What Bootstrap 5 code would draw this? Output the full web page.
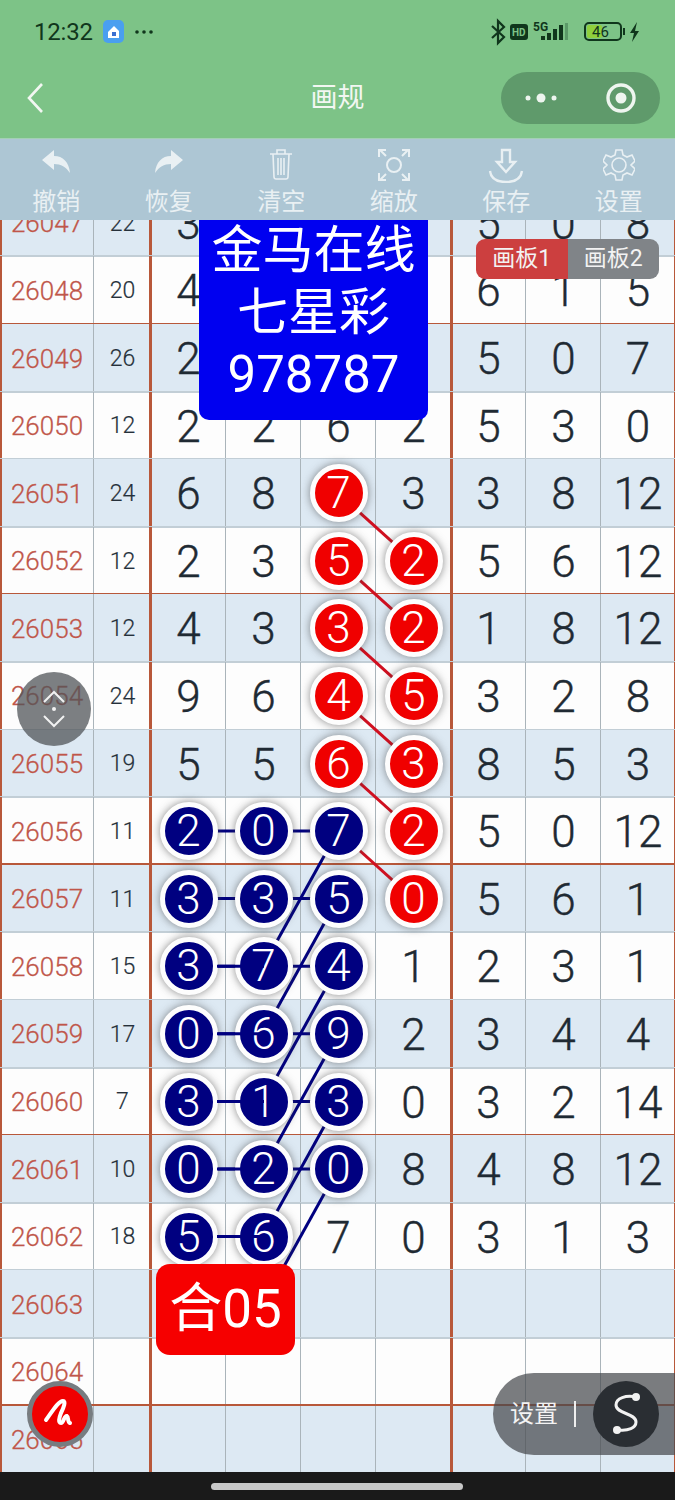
<!DOCTYPE html>
<html lang="zh">
<head>
  <meta charset="UTF-8" />
  <meta name="viewport" content="width=device-width, initial-scale=1.0"/>
  <title>画规</title>
  <link href="https://cdn.jsdelivr.net/npm/bootstrap@5.3.0/dist/css/bootstrap.min.css" rel="stylesheet"/>
  <style>
    body { background: #1a1a1a; font-family: Roboto, "Noto Sans CJK SC", sans-serif; }
    .phone { width: 675px; height: 1500px; overflow: hidden; }
    .top-green { background: #7dc387; height: 138px; }
    .status-line { height: 62px; padding: 2px 34px 0; color: #10361c; }
    .clock { font-size: 24px; letter-spacing: -.2px; }
    .nav-line { height: 72px; }
    .nav-title { font-size: 27px; color: #f2f7f2; left: 0; right: 0; top: 16px; }
    .capsule { width: 159px; height: 52px; border-radius: 26px; background: #5f9a6b; margin-right: 15px; }
    .tools { height: 82px; background: #adc6d4; border-top: 1px solid #a3d0b4; }
    .tool { width: 112.5px; color: #e9f0f3; font-size: 24px; line-height: 28px; padding-top: 8px; }
    .tool svg { display: block; height: 36px; margin-bottom: 5px; }
    .board { height: 1252px; overflow: hidden; background: #fdfdfd; }
    .rows { margin-top: -31.2px; }
    .grow { grid-template-columns: 94px 57px 75px 75px 75px 75px 75px 75px 74px; height: 67.6px; position: relative; }
    .grow::after { content: ""; position: absolute; left: 0; right: 0; bottom: -1px; height: 2px; background: #c2ced6; }
    .grow.redline::after { height: 3px; bottom: -1.5px; background: #b8583a; }
    .grow.tint { background: #dde9f3; }
    .c0 { box-shadow: inset 2px 0 0 #b8583a, inset -1px 0 0 #aab4ba; color: #c0564a; font-size: 26px; font-weight: 300; -webkit-text-stroke: .3px #c0564a; padding-top: 2px; }
    .c1 { box-shadow: inset -2px 0 0 #b8583a; color: #25303a; font-size: 23px; font-weight: 300; -webkit-text-stroke: .2px #25303a; padding-top: 2px; }
    .c2 { box-shadow: inset 1px 0 0 #b8583a, inset -1px 0 0 #aab4ba; }
    .c3, .c4 { box-shadow: inset -1px 0 0 #aab4ba; }
    .c5 { box-shadow: inset -1px 0 0 #b8583a; }
    .c6 { box-shadow: inset 2px 0 0 #b8583a, inset -1px 0 0 #aab4ba; }
    .c7 { box-shadow: inset -1px 0 0 #aab4ba; }
    .c8 { box-shadow: inset -1px 0 0 #b8583a; }
    .num { font-size: 44px; font-weight: 300; color: #1f2a33; -webkit-text-stroke: .4px #1f2a33; padding-top: 2px; }
    .ball { position: relative; z-index: 2; width: 58px; height: 58px; flex: none; border-radius: 50%; border: 5px solid #fdfdfd; color: #fff;
      font-size: 44px; font-weight: 300; box-shadow: 0 0 8px rgba(60, 60, 60, .6); }
    .ball-red { background: #f00000; }
    .ball-navy { background: #000080; }
    .link-layer { position: absolute; left: 0; top: 0; z-index: 1; }
    .link-top { z-index: 3; }
    .promo { position: absolute; z-index: 4; left: 199px; top: 0; width: 229px; height: 200px; background: #0000f0; color: #fff;
      border-radius: 0 0 10px 10px; font-size: 51px; line-height: 62px; padding-top: 0; }
    .boards-tabs { position: absolute; z-index: 4; left: 476px; top: 19px; width: 183px; height: 40px; font-size: 23px; color: #f3f3f3; }
    .board-tab { width: 50%; background: #808488; border-radius: 0 9px 9px 0; }
    .board-tab.on { background: #cc3f3f; border-radius: 9px 0 0 9px; }
    .sum-box { position: absolute; z-index: 4; left: 156px; top: 1044px; width: 139px; height: 91px; background: #f60000; color: #fff;
      border-radius: 14px; font-size: 53px; font-weight: 400; }
    .scroll-btn { position: absolute; z-index: 5; left: 17px; top: 452px; width: 74px; height: 74px; border-radius: 50%; background: rgba(80, 84, 88, .75); }
    .pen-btn { position: absolute; z-index: 5; left: 27px; top: 1161px; width: 66px; height: 66px; border-radius: 50%; background: #f00000; border: 5px solid #777c80; }
    .set-pill { position: absolute; z-index: 5; left: 493px; top: 1153px; width: 182px; height: 82px; border-radius: 41px 0 0 41px; background: rgba(70, 74, 78, .72);
      color: #f3f3f3; font-size: 24px; padding-left: 17px; }
    .pill-sep { width: 2px; height: 26px; background: #eee; margin-left: 16px; margin-right: 17px; }
    .pill-s { width: 66px; height: 66px; border-radius: 50%; background: #2a2e33; }
    .home-bar { height: 28px; background: #1a1a1a; }
    .home-pill { width: 252px; height: 7px; border-radius: 4px; background: #c8c8c8; margin-top: 11px; margin-right: 2px; }
  </style>
</head>
<body class="m-0">
  <div class="phone d-flex flex-column">
    <div class="top-green">
      <div class="status-line d-flex align-items-center">
        <span class="clock">12:32</span>
        <svg class="ms-2" width="25" height="26" viewBox="0 0 25 26">
          <rect x="2" y="1" width="21" height="23" rx="5" fill="#4a9ff0"/>
          <path d="M7 13l6-6 5 5v7H7z" fill="#fff"/><rect x="11" y="13" width="4" height="4" fill="#3a6fd0"/>
        </svg>
        <svg class="ms-2" width="20" height="6" viewBox="0 0 20 6"><g fill="#10361c"><circle cx="3" cy="3" r="1.8"/><circle cx="10" cy="3" r="1.8"/><circle cx="17" cy="3" r="1.8"/></g></svg>
        <svg class="ms-auto" width="150" height="30" viewBox="0 0 150 30">
          <path d="M1 9l12 11-6 6V4l6 6L1 21" fill="none" stroke="#10361c" stroke-width="2.2"/>
          <rect x="19" y="7" width="18" height="16" rx="3" fill="#10361c"/>
          <text x="21" y="19" font-size="10" font-weight="700" fill="#7dc387" font-family="Roboto">HD</text>
          <text x="42" y="14" font-size="12" font-weight="700" fill="#10361c" font-family="Roboto">5G</text>
          <g fill="#10361c"><rect x="50" y="19" width="4" height="4"/><rect x="56" y="16" width="4" height="7"/><rect x="62" y="12" width="4" height="11"/><rect x="68" y="8" width="4" height="15"/></g>
          <rect x="74" y="6" width="3" height="17" fill="#5b9a68"/>
          <rect x="94" y="6" width="36" height="17" rx="4" fill="none" stroke="#10361c" stroke-width="2"/>
          <rect x="96" y="8" width="15" height="13" rx="2" fill="#8fd03c"/>
          <text x="101" y="20" font-size="15" fill="#10361c" font-family="Roboto">46</text>
          <rect x="132" y="11" width="2" height="7" fill="#10361c"/>
          <path d="M146 5l-7 11h4l-2 9 7-11h-4z" fill="#10361c"/>
        </svg>
      </div>
      <div class="nav-line d-flex align-items-center position-relative">
        <svg class="ms-4" width="20" height="32" viewBox="0 0 20 32"><path d="M18 2L5 16l13 14" fill="none" stroke="#f2f7f2" stroke-width="2.6"/></svg>
        <div class="nav-title position-absolute text-center">画规</div>
        <div class="capsule ms-auto d-flex align-items-center">
          <svg class="ms-4" width="40" height="12" viewBox="0 0 40 12"><g fill="#eef5ef"><circle cx="3" cy="6" r="2.5"/><circle cx="16" cy="6" r="4.5"/><circle cx="29" cy="6" r="2.5"/></g></svg>
          <svg class="ms-auto" width="32" height="32" viewBox="0 0 32 32" style="margin-right:23px"><circle cx="16" cy="16" r="13" fill="none" stroke="#eef5ef" stroke-width="3.4"/><circle cx="16" cy="16" r="5.5" fill="#eef5ef"/></svg>
        </div>
      </div>
    </div>

    <div class="tools d-flex">
      <div class="tool d-flex flex-column align-items-center">
        <svg width="30" height="36" viewBox="0 0 30 36"><path d="M1 13L13 3v6c9 0 15 6 16 17-4-6-9-9-16-9v6z" fill="#e9f0f3"/></svg>
        <span>撤销</span>
      </div>
      <div class="tool d-flex flex-column align-items-center">
        <svg width="30" height="36" viewBox="0 0 30 36"><path d="M29 13L17 3v6C8 9 2 15 1 26c4-6 9-9 16-9v6z" fill="#e9f0f3"/></svg>
        <span>恢复</span>
      </div>
      <div class="tool d-flex flex-column align-items-center">
        <svg width="26" height="36" viewBox="0 0 26 36"><g fill="none" stroke="#e9f0f3" stroke-width="1.6"><path d="M2 7h22M9 7V3h8v4M5 7l1 23q.2 2 2 2h10q1.8 0 2-2l1-23M10 11v17M13 11v17M16 11v17"/></g></svg>
        <span>清空</span>
      </div>
      <div class="tool d-flex flex-column align-items-center">
        <svg width="32" height="36" viewBox="0 0 32 36"><g fill="none" stroke="#e9f0f3" stroke-width="2"><circle cx="16" cy="18" r="7"/><path d="M1 10V3h7M2 3l6 6M31 10V3h-7M30 3l-6 6M1 26v7h7M2 33l6-6M31 26v7h-7M30 33l-6-6"/></g></svg>
        <span>缩放</span>
      </div>
      <div class="tool d-flex flex-column align-items-center">
        <svg width="36" height="36" viewBox="0 0 36 36"><g fill="none" stroke="#e9f0f3" stroke-width="2.4"><path d="M14 3h8v12h5l-9 10-9-10h5z"/><path d="M2 24c1 8 7 11 16 11s15-3 16-11"/></g></svg>
        <span>保存</span>
      </div>
      <div class="tool d-flex flex-column align-items-center">
        <svg width="32" height="36" viewBox="0 0 32 36"><g fill="none" stroke="#e9f0f3" stroke-width="1.6"><circle cx="16" cy="18" r="7"/><path d="M13 3h6l1 5 4 2 5-2 3 6-4 4 4 4-3 6-5-2-4 2-1 5h-6l-1-5-4-2-5 2-3-6 4-4-4-4 3-6 5 2 4-2z"/></g></svg>
        <span>设置</span>
      </div>
    </div>

    <div id="board" class="board position-relative">
      <div id="rows" class="rows"></div>
      <svg id="linksUnder" class="link-layer" width="675" height="1252"></svg>
      <svg id="linksOver" class="link-layer link-top" width="675" height="1252"></svg>

      <div class="promo text-center">金马在线<br>七星彩<br>978787</div>
      <div class="boards-tabs d-flex">
        <div class="board-tab on d-flex align-items-center justify-content-center">画板1</div>
        <div class="board-tab d-flex align-items-center justify-content-center">画板2</div>
      </div>
      <div class="sum-box d-flex align-items-center justify-content-center">合05</div>

      <div class="scroll-btn d-flex align-items-center justify-content-center">
        <svg width="30" height="50" viewBox="0 0 30 50"><g fill="none" stroke="#f2f2f2" stroke-width="2"><path d="M5 18L15 8l10 10M5 32l10 10 10-10"/></g><circle cx="15" cy="25" r="2" fill="#f2f2f2"/></svg>
      </div>
      <div class="pen-btn d-flex align-items-center justify-content-center">
        <svg width="36" height="36" viewBox="0 0 36 36"><path d="M4 24C10 16 16 5 21 5c3 0 1 6-2 12-2 5-3 10 0 10 3 0 3-8 6-7 2 1 0 6 3 7" fill="none" stroke="#fff" stroke-width="4" stroke-linecap="round" stroke-linejoin="round"/></svg>
      </div>
      <div class="set-pill d-flex align-items-center">
        <span>设置</span><span class="pill-sep"></span>
        <div class="pill-s d-flex align-items-center justify-content-center">
          <svg width="36" height="44" viewBox="0 0 36 44"><path d="M28 5C18 3 8 6 8 13c0 9 20 8 20 17 0 6-8 9-17 8" fill="none" stroke="#f2f2f2" stroke-width="3"/><circle cx="28" cy="5" r="4" fill="#f2f2f2"/><circle cx="9" cy="38" r="4" fill="#f2f2f2"/></svg>
        </div>
      </div>
    </div>

    <div class="home-bar d-flex justify-content-center"><div class="home-pill"></div></div>
  </div>

  <script>
    // r = red ball, b = navy ball
    const data = [
      [26047, 22, '3', '', '', '', '5', '0', '8'],
      [26048, 20, '4', '', '', '', '6', '1', '5'],
      [26049, 26, '2', '', '', '', '5', '0', '7'],
      [26050, 12, '2', '2', '6', '2', '5', '3', '0'],
      [26051, 24, '6', '8', '7r', '3', '3', '8', '12'],
      [26052, 12, '2', '3', '5r', '2r', '5', '6', '12'],
      [26053, 12, '4', '3', '3r', '2r', '1', '8', '12'],
      [26054, 24, '9', '6', '4r', '5r', '3', '2', '8'],
      [26055, 19, '5', '5', '6r', '3r', '8', '5', '3'],
      [26056, 11, '2b', '0b', '7b', '2r', '5', '0', '12'],
      [26057, 11, '3b', '3b', '5b', '0r', '5', '6', '1'],
      [26058, 15, '3b', '7b', '4b', '1', '2', '3', '1'],
      [26059, 17, '0b', '6b', '9b', '2', '3', '4', '4'],
      [26060, 7, '3b', '1b', '3b', '0', '3', '2', '14'],
      [26061, 10, '0b', '2b', '0b', '8', '4', '8', '12'],
      [26062, 18, '5b', '6b', '7', '0', '3', '1', '3'],
      [26063, '', '', '', '', '', '', '', ''],
      [26064, '', '', '', '', '', '', '', ''],
      [26065, '', '', '', '', '', '', '', '']
    ];
    const center = 'd-flex align-items-center justify-content-center';
    const rowsBox = document.getElementById('rows');

    data.forEach((row, i) => {
      const el = document.createElement('div');
      el.className = 'grow d-grid' + (i % 2 === 0 ? ' tint' : '') + (i % 4 === 1 ? ' redline' : '');
      el.innerHTML = row.map((val, c) => {
        if (c < 2) return `<div class="c${c} ${center}">${val}</div>`;
        const v = String(val);
        if (v.endsWith('r') || v.endsWith('b')) {
          const tone = v.endsWith('r') ? 'ball-red' : 'ball-navy';
          return `<div class="c${c} ${center}"><div class="ball ${tone} ${center}">${v.slice(0, -1)}</div></div>`;
        }
        return `<div class="c${c} num ${center}">${v}</div>`;
      }).join('');
      rowsBox.appendChild(el);
    });

    const colX = c => 188 + (c - 2) * 75;
    const rowY = i => -31.2 + 67.6 * i + 33.8;

    function addLine(svgId, x1, y1, x2, y2, color) {
      const line = document.createElementNS('http://www.w3.org/2000/svg', 'line');
      line.setAttribute('x1', x1); line.setAttribute('y1', y1);
      line.setAttribute('x2', x2); line.setAttribute('y2', y2);
      line.setAttribute('stroke', color); line.setAttribute('stroke-width', 3);
      document.getElementById(svgId).appendChild(line);
    }

    // red run, column 4 to column 5 one row down
    for (let i = 4; i <= 9; i++) addLine('linksUnder', colX(4), rowY(i), colX(5), rowY(i + 1), '#d01020');

    // navy run
    for (let i = 9; i <= 15; i++) {
      addLine('linksUnder', colX(2), rowY(i), colX(3), rowY(i), '#000080');
      if (i < 15) addLine('linksUnder', colX(3), rowY(i), colX(4), rowY(i), '#000080');
      if (i < 15) addLine('linksUnder', colX(4), rowY(i), colX(3), rowY(i + 2), '#000080');
      // from 26058 down the first link runs over the second ball up to its middle
      if (i >= 11) addLine('linksOver', colX(2) + 29, rowY(i), colX(3) + 1, rowY(i), '#000080');
    }
  </script>
</body>
</html>
